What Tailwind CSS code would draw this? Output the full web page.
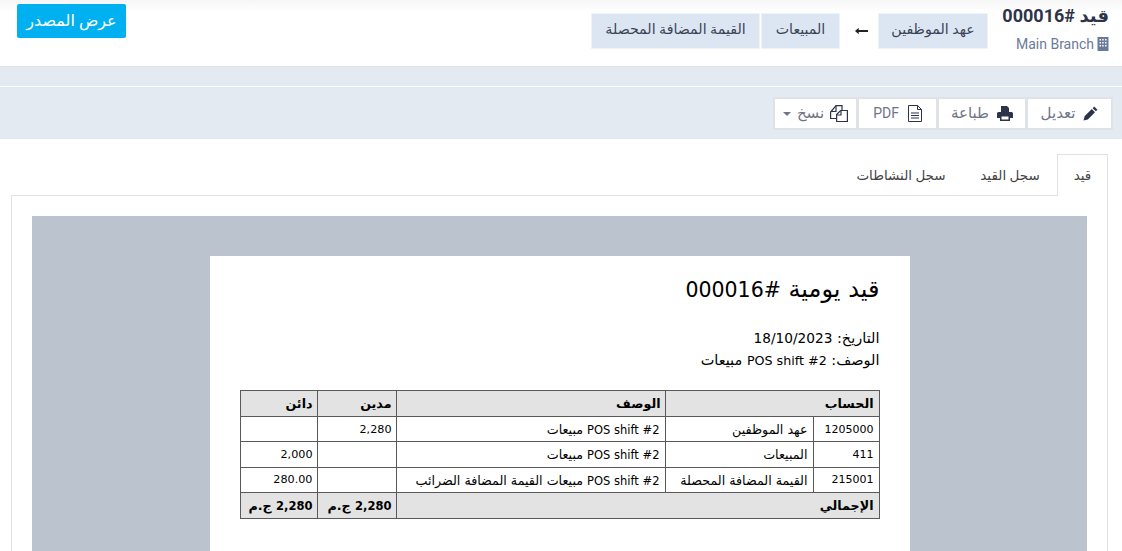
<!DOCTYPE html>
<html lang="ar" dir="rtl">
<head>
<meta charset="UTF-8">
<title>قيد #000016</title>
<script src="https://cdn.jsdelivr.net/npm/@tailwindcss/browser@4"></script>
</head>
<body class="h-[551px] overflow-hidden bg-white font-['Roboto','DejaVu_Sans',sans-serif] text-[#333]">
  <!-- header -->
  <div class="h-[67px] flex justify-between border-b border-[#dfe3e8] bg-gradient-to-b from-[#f6f6f6] to-white to-[12px] pr-[13px] pl-[17px]">
    <div class="flex items-start">
      <div class="w-[121px] pt-[4px]">
        <div class="text-[18px] leading-[24px] font-bold text-[#2d3349] whitespace-nowrap">قيد #000016</div>
        <div class="mt-[8px] flex items-center gap-[3px] text-[14px] leading-[16px] text-[#6b7a99]">
          <svg class="w-[12px] h-[14px] shrink-0" viewBox="0 0 11 14"><rect width="11" height="14" fill="#6b7a99"/><path d="M2 2h1.500v1.500H2zM4.700 2h1.500v1.500H4.700zM7.500 2H9v1.500H7.500zM2 5h1.500v1.500H2zM4.700 5h1.500v1.500H4.700zM7.500 5H9v1.500H7.500zM2 8h1.500v1.500H2zM4.700 8h1.500v1.500H4.700zM7.500 8H9v1.500H7.500z" fill="#fff"/></svg>
          <span dir="ltr">Main Branch</span>
        </div>
      </div>
      <div class="mt-[13px] flex items-center text-[14.2px] text-[#3a4256]">
        <span class="h-[36px] pb-[2px] w-[110px] flex items-center justify-center bg-[#dce6f2] border border-[#eef3f9]">عهد الموظفين</span>
        <svg class="w-[13px] h-[8px] mr-[10px] ml-[15px]" viewBox="0 0 14 8"><path d="M0 4l4-3.500V3h10v2H4v2.500z" fill="#222"/></svg>
        <span class="h-[36px] pb-[2px] w-[79px] flex items-center justify-center bg-[#dce6f2] border border-[#eef3f9]">المبيعات</span>
        <span class="h-[36px] pb-[2px] w-[169px] mr-[1px] flex items-center justify-center bg-[#dce6f2] border border-[#eef3f9]">القيمة المضافة المحصلة</span>
      </div>
    </div>
    <button class="mt-[4px] h-[34px] w-[109px] rounded-[2px] bg-[#00b0f0] text-[16px] text-white">عرض المصدر</button>
  </div>

  <div class="h-[19px] bg-[#e4eaf2]"></div>
  <!-- toolbar -->
  <div class="h-[53px] border-t border-white bg-[#e4eaf2] pt-[10px] pr-[9px]">
    <div class="flex h-[33px] text-[15px] text-[#6e7587]">
      <span class="w-[87px] flex items-center justify-center gap-[8px] bg-white border-2 border-[#dfe2e6]">
        <svg class="w-[15px] h-[15px]" viewBox="0 0 14 14"><path d="M10.500.5l3 3-1.500 1.500-3-3zM8.200 2.800l3 3L4.500 12.500l-4 1 1-4z" fill="#2d3349"/></svg>
        <span>تعديل</span>
      </span>
      <span class="w-[90px] mr-[-1px] flex items-center justify-center gap-[8px] bg-white border-2 border-[#dfe2e6]">
        <svg class="w-[16px] h-[15px]" viewBox="0 0 16 15"><path d="M4 0h6l2 2v4H4zM1.500 6h13A1.500 1.500 0 0 1 16 7.500V12h-3v3H3v-3H0V7.500A1.500 1.500 0 0 1 1.500 6zM4.500 10.500v3h7v-3z" fill="#2d3349"/></svg>
        <span>طباعة</span>
      </span>
      <span class="w-[81px] mr-[-1px] flex items-center justify-center gap-[9px] bg-white border-2 border-[#dfe2e6]">
        <svg class="w-[14px] h-[17px]" viewBox="0 0 14 17" fill="none" stroke="#2d3349"><path d="M.5.500h9l4 4v12H.5zM9.500.500v4h4"/><path d="M3 8h8M3 10.500h8M3 13h8"/></svg>
        <span dir="ltr" class="text-[14px]">PDF</span>
      </span>
      <span class="w-[85px] mr-[-1px] flex items-center justify-center gap-[6px] bg-white border-2 border-[#dfe2e6]">
        <svg class="w-[18px] h-[17px]" viewBox="0 0 18 17" fill="none" stroke="#2d3349" stroke-width="1.200"><path d="M6 13.500H.6V7L6 .6h6v5"/><path d="M6 1v5.500H1"/><path d="M6.600 9.500l4-4h6.800v11H6.600z"/><path d="M11 6v4H7"/></svg>
        <span>نسخ</span>
        <span class="w-0 h-0 border-x-[4px] border-x-transparent border-t-[4px] border-t-[#6e7587]"></span>
      </span>
    </div>
  </div>

  <!-- tabs -->
  <div class="h-[57px] pt-[15px] pr-[14px] flex text-[13.5px] text-[#444]">
    <span class="h-[42px] w-[51px] flex items-center justify-center bg-white border border-b-0 border-[#dfe3e8] relative z-10">قيد</span>
    <span class="h-[42px] w-[94px] flex items-center justify-center">سجل القيد</span>
    <span class="h-[42px] w-[124px] flex items-center justify-center">سجل النشاطات</span>
  </div>

  <!-- panel -->
  <div class="mt-[-1px] mr-[14px] ml-[11px] border-x border-t border-[#dfe3e8] p-[20px] h-[400px]">
    <div class="bg-[#bbc3ce] pt-[40px] h-[380px] flex justify-center font-['DejaVu_Sans',sans-serif] text-black">
      <div class="w-[700px] bg-white px-[30px] pt-[15px]">
        <h1 class="text-[24px] leading-[36px] font-normal">قيد يومية <span class="text-[20.5px]">#000016</span></h1>
        <div class="mt-[19px] text-[14.5px] leading-[22px]">
          <div>التاريخ: <span class="text-[13.7px]">18/10/2023</span></div>
          <div>الوصف: <span class="text-[12.7px]">POS shift #2</span> مبيعات</div>
        </div>
        <table class="mt-[18px] w-[639px] border-collapse table-fixed text-[12.7px]">
          <colgroup><col class="w-[66px]"><col class="w-[148px]"><col class="w-[269px]"><col class="w-[79px]"><col class="w-[77px]"></colgroup>
          <thead>
            <tr class="h-[26px] bg-[#e3e3e3] font-bold">
              <th colspan="2" class="border border-[#595959] px-[5px] text-right">الحساب</th>
              <th class="border border-[#595959] px-[4px] text-right">الوصف</th>
              <th class="border border-[#595959] px-[4px] text-right">مدين</th>
              <th class="border border-[#595959] px-[4px] text-right">دائن</th>
            </tr>
          </thead>
          <tbody>
            <tr class="h-[25px]">
              <td class="border border-[#595959] px-[5px] pt-[2px] text-[11px]">1205000</td>
              <td class="border border-[#595959] px-[5px] pt-[2px]">عهد الموظفين</td>
              <td class="border border-[#595959] px-[5px] pt-[2px] whitespace-nowrap"><span class="text-[11.5px]">POS shift #2</span> مبيعات</td>
              <td class="border border-[#595959] px-[4px] pt-[2px] text-[11.2px]">2,280</td>
              <td class="border border-[#595959] px-[4px] pt-[2px]"></td>
            </tr>
            <tr class="h-[26px]">
              <td class="border border-[#595959] px-[5px] pt-[1px] text-[11px]">411</td>
              <td class="border border-[#595959] px-[5px] pt-[1px]">المبيعات</td>
              <td class="border border-[#595959] px-[5px] pt-[1px] whitespace-nowrap"><span class="text-[11.5px]">POS shift #2</span> مبيعات</td>
              <td class="border border-[#595959] px-[4px] pt-[1px]"></td>
              <td class="border border-[#595959] px-[4px] pt-[1px] text-[11.2px]">2,000</td>
            </tr>
            <tr class="h-[25px]">
              <td class="border border-[#595959] px-[5px] pt-[1px] text-[11px]">215001</td>
              <td class="border border-[#595959] px-[5px] pt-[1px] whitespace-nowrap">القيمة المضافة المحصلة</td>
              <td class="border border-[#595959] px-[5px] pt-[1px] whitespace-nowrap"><span class="text-[11.5px]">POS shift #2</span> مبيعات القيمة المضافة الضرائب</td>
              <td class="border border-[#595959] px-[4px] pt-[1px]"></td>
              <td class="border border-[#595959] px-[4px] pt-[1px] text-[11.2px]">280.00</td>
            </tr>
            <tr class="h-[26px] bg-[#e3e3e3] font-bold">
              <td colspan="3" class="border border-[#595959] px-[5px]">الإجمالي</td>
              <td class="border border-[#595959] px-[4px] whitespace-nowrap"><span class="text-[11.5px]">2,280</span> ج.م</td>
              <td class="border border-[#595959] px-[4px] whitespace-nowrap"><span class="text-[11.5px]">2,280</span> ج.م</td>
            </tr>
          </tbody>
        </table>
      </div>
    </div>
  </div>
</body>
</html>
